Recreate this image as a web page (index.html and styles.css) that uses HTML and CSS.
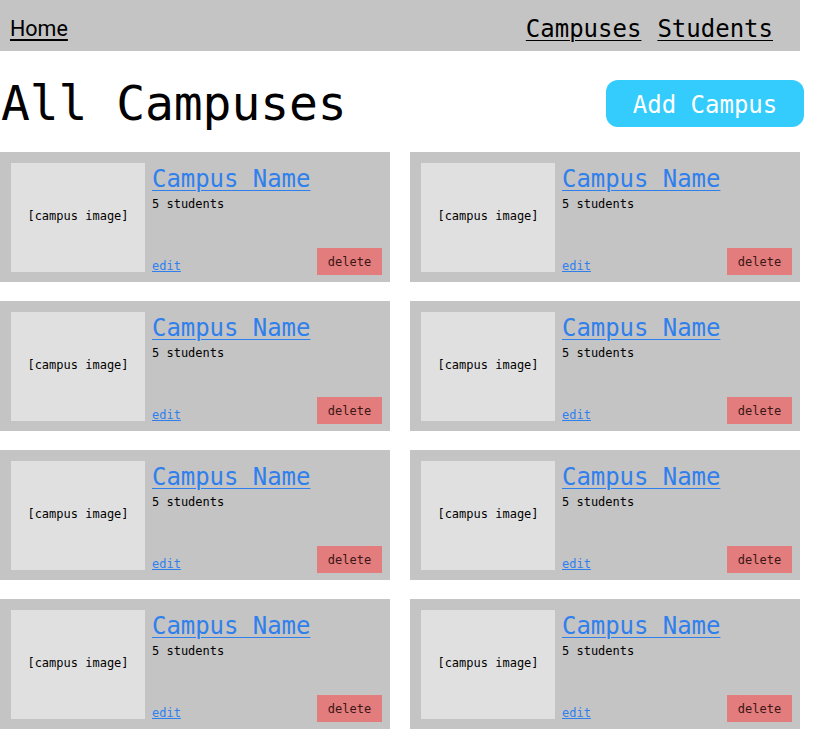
FILE: index.html
```html
<!DOCTYPE html>
<html lang="en">
<head>
<meta charset="utf-8">
<title>All Campuses</title>
<link rel="stylesheet" href="styles.css">
</head>
<body>
<div class="page">
  <nav class="navbar">
    <a class="nav-home" href="#">Home</a>
    <div class="nav-links">
      <a class="nav-link" href="#">Campuses</a>
      <a class="nav-link" href="#">Students</a>
    </div>
  </nav>
  <header class="header">
    <h1 class="title">All Campuses</h1>
    <button class="add-btn">Add Campus</button>
  </header>
  <main class="grid">
    <div class="card"><div class="card-img">[campus image]</div><div class="card-info"><a class="card-name" href="#">Campus Name</a><div class="card-count">5 students</div><a class="card-edit" href="#">edit</a></div><button class="card-delete">delete</button></div>
    <div class="card"><div class="card-img">[campus image]</div><div class="card-info"><a class="card-name" href="#">Campus Name</a><div class="card-count">5 students</div><a class="card-edit" href="#">edit</a></div><button class="card-delete">delete</button></div>
    <div class="card"><div class="card-img">[campus image]</div><div class="card-info"><a class="card-name" href="#">Campus Name</a><div class="card-count">5 students</div><a class="card-edit" href="#">edit</a></div><button class="card-delete">delete</button></div>
    <div class="card"><div class="card-img">[campus image]</div><div class="card-info"><a class="card-name" href="#">Campus Name</a><div class="card-count">5 students</div><a class="card-edit" href="#">edit</a></div><button class="card-delete">delete</button></div>
    <div class="card"><div class="card-img">[campus image]</div><div class="card-info"><a class="card-name" href="#">Campus Name</a><div class="card-count">5 students</div><a class="card-edit" href="#">edit</a></div><button class="card-delete">delete</button></div>
    <div class="card"><div class="card-img">[campus image]</div><div class="card-info"><a class="card-name" href="#">Campus Name</a><div class="card-count">5 students</div><a class="card-edit" href="#">edit</a></div><button class="card-delete">delete</button></div>
    <div class="card"><div class="card-img">[campus image]</div><div class="card-info"><a class="card-name" href="#">Campus Name</a><div class="card-count">5 students</div><a class="card-edit" href="#">edit</a></div><button class="card-delete">delete</button></div>
    <div class="card"><div class="card-img">[campus image]</div><div class="card-info"><a class="card-name" href="#">Campus Name</a><div class="card-count">5 students</div><a class="card-edit" href="#">edit</a></div><button class="card-delete">delete</button></div>
  </main>
</div>
</body>
</html>
```
FILE: styles.css
```css
* { box-sizing: border-box; }
html, body { margin: 0; padding: 0; background: #fff; }
body {
  font-family: "DejaVu Sans Mono", "Liberation Mono", monospace;
  color: #000;
}
.page { width: 800px; }

.navbar {
  height: 51px;
  background: #c4c4c4;
  display: flex;
  align-items: center;
  justify-content: space-between;
  padding: 6px 27px 0 10px;
}
.nav-home {
  font-family: Roboto, "Liberation Sans", sans-serif;
  font-size: 21.5px;
  color: #000;
  text-decoration: underline;
  text-underline-offset: 3px;
}
.nav-links { display: flex; gap: 16px; }
.nav-link {
  font-size: 24px;
  color: #000;
  text-decoration: underline;
  text-underline-offset: 3px;
  text-decoration-thickness: 1px;
}

.header {
  width: 804px;
  height: 101px;
  display: flex;
  align-items: center;
  justify-content: space-between;
}
.title {
  margin: 2px 0 0 1px;
  font-size: 48px;
  font-weight: normal;
  line-height: 56px;
  letter-spacing: -0.1px;
}
.add-btn {
  width: 198px;
  height: 47px;
  margin-top: 3px;
  border: none;
  border-radius: 12px;
  background: #33ccfd;
  color: #fff;
  font-family: inherit;
  font-size: 24px;
  padding: 4px 0 0;
}

.grid {
  display: grid;
  grid-template-columns: 390px 390px;
  column-gap: 20px;
  row-gap: 19px;
}
.card {
  height: 130px;
  background: #c4c4c4;
  display: flex;
  padding: 11px 8px 7px 11px;
}
.card-img {
  width: 134px;
  height: 109px;
  flex: none;
  background: #e0e0e0;
  display: flex;
  align-items: center;
  justify-content: center;
  font-size: 12px;
  padding-bottom: 4px;
}
.card-info {
  flex: 1;
  margin-left: 7px;
  margin-top: 2px;
  margin-bottom: 2px;
  display: flex;
  flex-direction: column;
  align-items: flex-start;
}
.card-name {
  font-size: 24px;
  line-height: 28px;
  color: #2f80ed;
  text-decoration: underline;
  text-underline-offset: 3px;
  text-decoration-thickness: 1px;
  letter-spacing: -0.05px;
}
.card-count {
  margin-top: 4px;
  font-size: 12px;
  line-height: 14px;
}
.card-edit {
  margin-top: auto;
  font-size: 12px;
  line-height: 14px;
  color: #2f80ed;
  text-decoration: underline;
}
.card-delete {
  align-self: flex-end;
  width: 65px;
  height: 27px;
  border: none;
  padding: 0;
  background: #e37c7c;
  color: #3a1616;
  font-family: inherit;
  font-size: 12px;
}
```
